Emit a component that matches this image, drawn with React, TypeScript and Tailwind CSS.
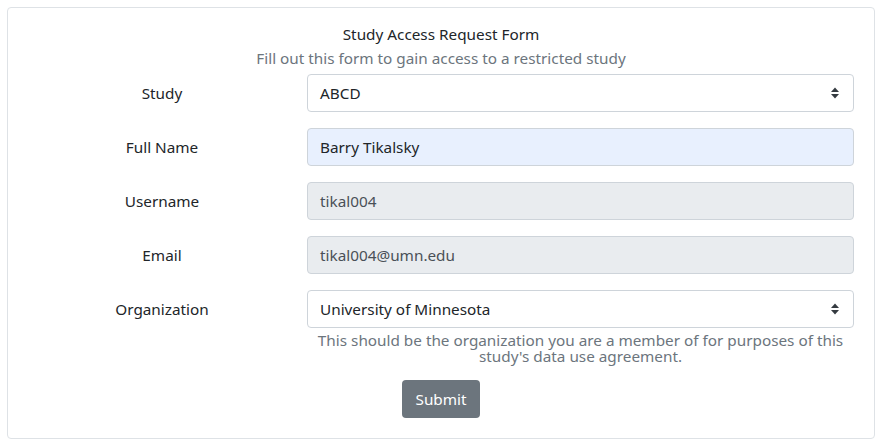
import React from 'react';

function SelectArrows() {
  return (
    <svg width="10" height="14" viewBox="0 0 10 14" className="absolute right-[13px] top-1/2 -translate-y-1/2">
      <path d="M1 6 L5 1.5 L9 6 Z" fill="#343a40" />
      <path d="M1 8 L5 12.5 L9 8 Z" fill="#343a40" />
    </svg>
  );
}

function Row({ label, children }: { label: string; children: React.ReactNode }) {
  return (
    <div className="flex items-start">
      <div className="w-[276px] h-[38px] flex items-center justify-center text-[#212529]">{label}</div>
      <div className="ml-[7px] w-[547px]">{children}</div>
    </div>
  );
}

const boxClass = 'relative h-[38px] w-full rounded border border-[#ced4da] px-[12px] flex items-center';

export default function App() {
  return (
    <div className="bg-white w-[883px] h-[444px] pt-[7px] pl-[7px]" style={{ fontFamily: '"Noto Sans", sans-serif' }}>
      <div className="w-[868px] h-[432px] rounded border border-[#dee2e6] pl-[16px] pt-[14px] text-[15.3px] leading-[24px]">
        <div className="w-[834px] text-center">
          <div className="text-[#212529]">Study Access Request Form</div>
          <div className="text-[#6c757d]">Fill out this form to gain access to a restricted study</div>
        </div>
        <div className="mt-[4px] flex flex-col gap-[16px]">
          <Row label="Study">
            <div className={`${boxClass} bg-white text-[#212529]`}>
              ABCD
              <SelectArrows />
            </div>
          </Row>
          <Row label="Full Name">
            <div className={`${boxClass} bg-[#e8f0fe] text-[#212529]`}>Barry Tikalsky</div>
          </Row>
          <Row label="Username">
            <div className={`${boxClass} bg-[#e9ecef] text-[#495057]`}>tikal004</div>
          </Row>
          <Row label="Email">
            <div className={`${boxClass} bg-[#e9ecef] text-[#495057]`}>tikal004@umn.edu</div>
          </Row>
          <Row label="Organization">
            <div className={`${boxClass} bg-white text-[#212529]`}>
              University of Minnesota
              <SelectArrows />
            </div>
            <div className="mt-[4px] px-[8px] text-center text-[#6c757d] leading-[16px]">
              This should be the organization you are a member of for purposes of this study's data use agreement.
            </div>
          </Row>
        </div>
        <div className="w-[834px] flex justify-center mt-[16px]">
          <button className="h-[38px] w-[78px] rounded bg-[#6c757d] text-white">Submit</button>
        </div>
      </div>
    </div>
  );
}
